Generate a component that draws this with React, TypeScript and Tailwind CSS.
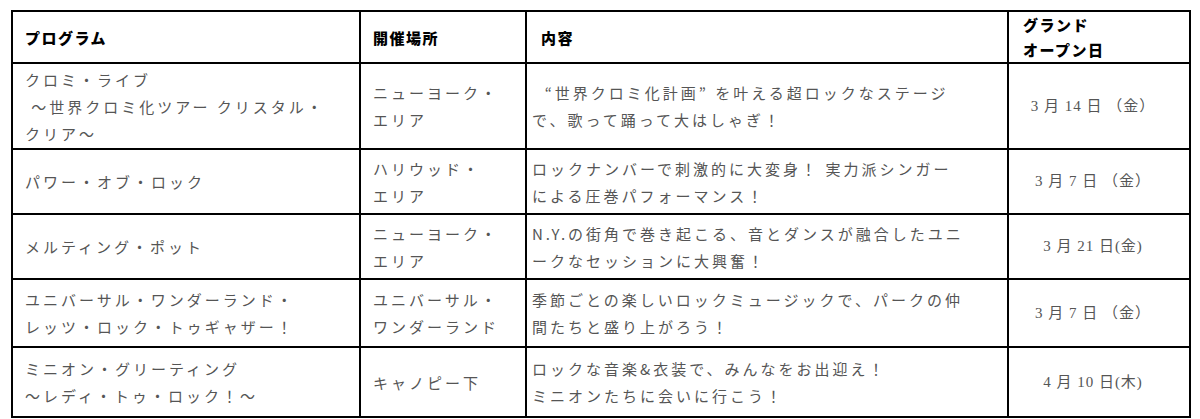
const body = "font-['Noto_Sans_CJK_JP',sans-serif] text-[15px] leading-[27px] tracking-[3px] text-[#555]"
const head = "font-['Noto_Sans_CJK_JP',sans-serif] text-[15px] leading-[25px] font-black tracking-[1.5px] text-black"
const date = "font-['Liberation_Serif','Noto_Sans_CJK_JP',serif] text-[15px] tracking-[1px] text-[#555] text-center pr-3"

type Row = {
  program: string[]
  place: string[]
  content: string[]
  open: string
  h: string
}

const rows: Row[] = [
  {
    program: ["クロミ・ライブ", " ～世界クロミ化ツアー クリスタル・", "クリア～"],
    place: ["ニューヨーク・", "エリア"],
    content: ["  “世界クロミ化計画” を叶える超ロックなステージ", "で、歌って踊って大はしゃぎ！"],
    open: "3 月 14 日 （金）",
    h: "h-[86px]",
  },
  {
    program: ["パワー・オブ・ロック"],
    place: ["ハリウッド・", "エリア"],
    content: ["ロックナンバーで刺激的に大変身！ 実力派シンガー", "による圧巻パフォーマンス！"],
    open: "3 月 7 日 （金）",
    h: "h-[65px]",
  },
  {
    program: ["メルティング・ポット"],
    place: ["ニューヨーク・", "エリア"],
    content: ["N.Y.の街角で巻き起こる、音とダンスが融合したユニ", "ークなセッションに大興奮！"],
    open: "3 月 21 日(金)",
    h: "h-[65px]",
  },
  {
    program: ["ユニバーサル・ワンダーランド・", "レッツ・ロック・トゥギャザー！"],
    place: ["ユニバーサル・", "ワンダーランド"],
    content: ["季節ごとの楽しいロックミュージックで、パークの仲", "間たちと盛り上がろう！"],
    open: "3 月 7 日 （金）",
    h: "h-[68px]",
  },
  {
    program: ["ミニオン・グリーティング", "～レディ・トゥ・ロック！～"],
    place: ["キャノピー下"],
    content: ["ロックな音楽&衣装で、みんなをお出迎え！", "ミニオンたちに会いに行こう！"],
    open: "4 月 10 日(木)",
    h: "h-[70px]",
  },
]

const Lines = ({ lines }: { lines: string[] }) => (
  <>
    {lines.map((l, i) => (
      <div key={i} className="whitespace-pre">
        {l}
      </div>
    ))}
  </>
)

export default function App() {
  return (
    <div className="w-[1200px] h-[419px] overflow-hidden bg-white pt-[10px] pl-[11px]">
      <table className="table-fixed border-collapse w-[1178px]">
        <colgroup>
          <col className="w-[348px]" />
          <col className="w-[166px]" />
          <col className="w-[482px]" />
          <col className="w-[182px]" />
        </colgroup>
        <thead>
          <tr className="h-[52px]">
            <th className={`border-2 border-black text-left align-middle pl-3 ${head}`}>プログラム</th>
            <th className={`border-2 border-black text-left align-middle pl-3 ${head}`}>開催場所</th>
            <th className={`border-2 border-black text-left align-middle pl-[14px] ${head}`}>内容</th>
            <th className={`border-2 border-black text-left align-middle pl-[14px] ${head}`}>
              <div>グランド</div>
              <div>オープン日</div>
            </th>
          </tr>
        </thead>
        <tbody>
          {rows.map((r, i) => (
            <tr key={i} className={r.h}>
              <td className={`border-2 border-black align-middle pl-3 ${body}`}>
                <Lines lines={r.program} />
              </td>
              <td className={`border-2 border-black align-middle pl-3 ${body}`}>
                <Lines lines={r.place} />
              </td>
              <td className={`border-2 border-black align-middle pl-[5px] ${body}`}>
                <Lines lines={r.content} />
              </td>
              <td className={`border-2 border-black align-middle ${date}`}>{r.open}</td>
            </tr>
          ))}
        </tbody>
      </table>
      <p className="mt-[1px] pl-[20px] font-['Noto_Sans_CJK_JP',sans-serif] text-[13px] leading-[18px] tracking-[2px] text-[#777]">
        ※画像はイメージです。内容は予告なく変更になる場合があります。
      </p>
    </div>
  )
}
